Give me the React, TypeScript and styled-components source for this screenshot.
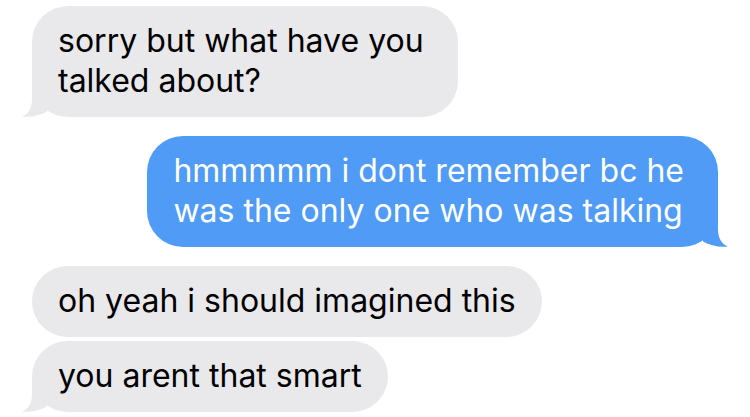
import styled, { createGlobalStyle, css } from 'styled-components';

type Side = 'them' | 'me';

type Message = {
  id: number;
  from: Side;
  text: string;
  tail: boolean;
};

const messages: Message[] = [
  { id: 1, from: 'them', text: 'sorry but what have you\ntalked about?', tail: true },
  {
    id: 2,
    from: 'me',
    text: 'hmmmmm i dont remember bc he\nwas the only one who was talking',
    tail: true,
  },
  { id: 3, from: 'them', text: 'oh yeah i should imagined this', tail: false },
  { id: 4, from: 'them', text: 'you arent that smart', tail: true },
];

const GRAY = '#e9e9eb';
const BLUE = '#4f9bf5';

const GlobalStyle = createGlobalStyle`
  html, body {
    margin: 0;
    padding: 0;
    background: #ffffff;
  }
  body {
    font-family: Inter, "Liberation Sans", Arial, sans-serif;
    -webkit-font-smoothing: antialiased;
  }
`;

/** iMessage bubble tail, drawn for the left side; mirrored for the right */
function Tail({ side }: { side: Side }) {
  return (
    <TailSvg $side={side} width="40" height="36" viewBox="0 0 40 36" aria-hidden>
      <path
        d="M10 0 L10 18 C10 28 6 33 0 35.6 C9 36.6 18 34.6 25 30.6 L25 0 Z"
        fill={side === 'me' ? BLUE : GRAY}
      />
    </TailSvg>
  );
}

export default function App() {
  return (
    <>
      <GlobalStyle />
      <Thread>
        {messages.map((m, i) => {
          const prev = messages[i - 1];
          const grouped = prev !== undefined && prev.from === m.from;
          return (
            <Bubble
              key={m.id}
              $side={m.from}
              $grouped={grouped}
              $multiline={m.text.includes('\n')}
            >
              {m.text}
              {m.tail && <Tail side={m.from} />}
            </Bubble>
          );
        })}
      </Thread>
    </>
  );
}

const Thread = styled.div`
  display: flex;
  flex-direction: column;
  align-items: flex-start;
  padding: 6px 32px 0;
  width: 750px;
  height: 417px;
  box-sizing: border-box;
  overflow: hidden;
`;

const Bubble = styled.div<{ $side: Side; $grouped: boolean; $multiline: boolean }>`
  position: relative;
  margin-top: ${({ $grouped }) => ($grouped ? '4px' : '19px')};
  &:first-child {
    margin-top: 0;
  }
  padding: 15px ${({ $multiline }) => ($multiline ? '34px' : '26px')} 16px 26px;
  border-radius: 36px;
  font-size: 32px;
  line-height: 40px;
  letter-spacing: 0;
  white-space: pre-line;
  ${({ $side }) =>
    $side === 'me'
      ? css`
          align-self: flex-end;
          background: ${BLUE};
          color: #ffffff;
        `
      : css`
          align-self: flex-start;
          background: ${GRAY};
          color: #000000;
        `}
`;

const TailSvg = styled.svg<{ $side: Side }>`
  position: absolute;
  bottom: 0;
  display: block;
  ${({ $side }) =>
    $side === 'me'
      ? css`
          right: -10px;
          transform: scaleX(-1);
        `
      : css`
          left: -10px;
        `}
`;
